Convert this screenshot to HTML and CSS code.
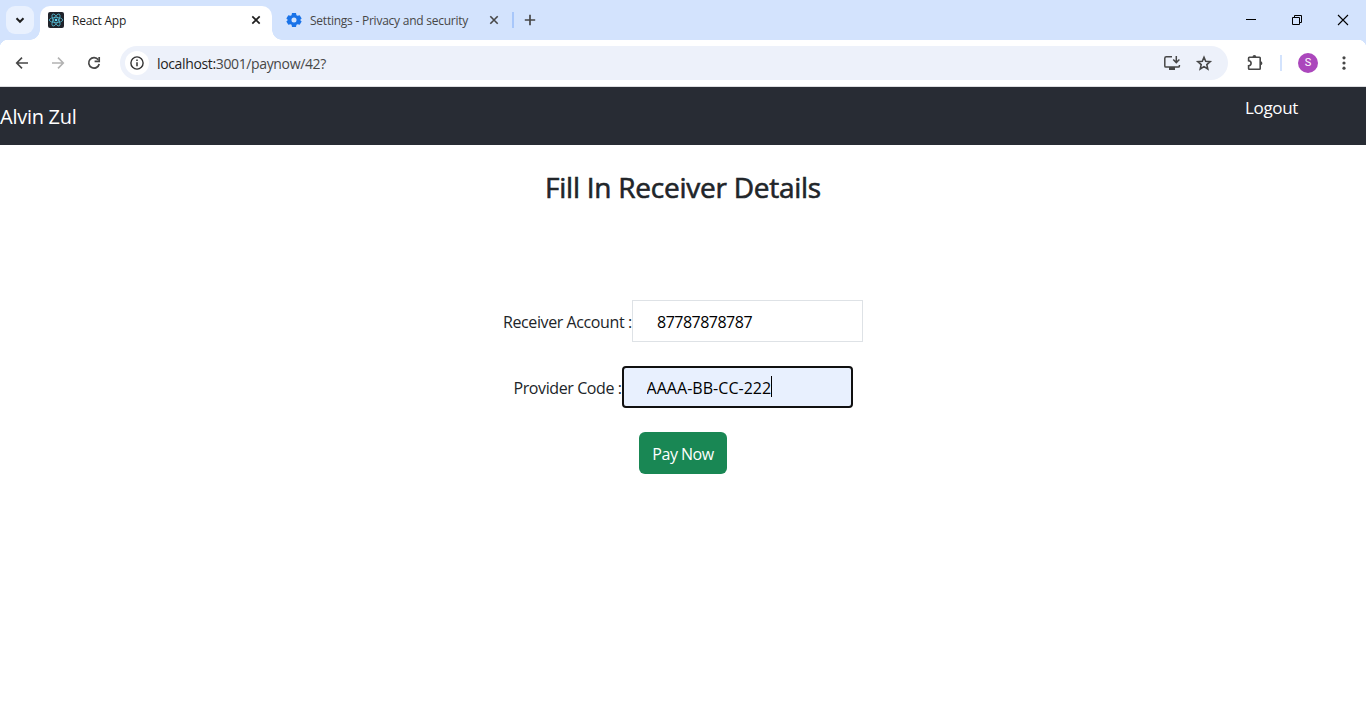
FILE: index.html
```html
<!DOCTYPE html>
<html lang="en">
<head>
<meta charset="utf-8">
<title>React App</title>
<link rel="stylesheet" href="styles.css">
</head>
<body>
<div class="tabstrip">
  <div class="tab-search"><svg width="28" height="28" viewBox="0 0 28 28"><path d="M10.5 12.3l3.5 3.5 3.5-3.5" fill="none" stroke="#1f1f1f" stroke-width="2"/></svg></div>
  <div class="tab active">
    <svg class="favicon" width="16" height="16" viewBox="0 0 16 16"><rect width="16" height="16" rx="2" fill="#20232a"/><g fill="none" stroke="#53b9d1" stroke-width=".8"><ellipse cx="8" cy="8" rx="6.7" ry="2.6"/><ellipse cx="8" cy="8" rx="6.7" ry="2.6" transform="rotate(60 8 8)"/><ellipse cx="8" cy="8" rx="6.7" ry="2.6" transform="rotate(120 8 8)"/></g><circle cx="8" cy="8" r="1.3" fill="#61dafb"/></svg>
    <span class="tab-title t-react">React App</span>
    <svg class="close" width="16" height="16" viewBox="0 0 16 16"><path d="M4.3 4.3l7.4 7.4M11.7 4.3l-7.4 7.4" stroke="#1f1f1f" stroke-width="1.7"/></svg>
  </div>
  <div class="tab">
    <svg class="favicon" width="16" height="16" viewBox="0 0 24 24"><path fill="#1a73e8" fill-rule="evenodd" d="M9 1.500h6l.7 3.200 1.700 1 3.100-1 3 5.200-2.400 2.100 2.400 2.100-3 5.200-3.100-1-1.700 1-.7 3.200H9l-.7-3.200-1.700-1-3.100 1-3-5.200L2.900 12 .5 9.900l3-5.200 3.100 1 1.700-1zM12 8.200a3.800 3.800 0 1 0 0 7.600 3.800 3.800 0 0 0 0-7.600z"/></svg>
    <span class="tab-title t-settings">Settings - Privacy and security</span>
    <svg class="close" width="16" height="16" viewBox="0 0 16 16"><path d="M4.300 4.300l7.400 7.400M11.700 4.300l-7.400 7.400" stroke="#474747" stroke-width="1.600"/></svg>
  </div>
  <div class="tab-divider"></div>
  <svg class="new-tab" width="16" height="16" viewBox="0 0 16 16"><path d="M8 2.800v10.400M2.800 8h10.400" stroke="#474747" stroke-width="1.700"/></svg>
  <div class="window-controls">
    <svg width="46" height="40" viewBox="0 0 46 40"><path d="M18 19.500h10" stroke="#000"/></svg>
    <svg width="46" height="40" viewBox="0 0 46 40"><path d="M18.500 17.500h7v7h-7zM20.500 17.500v-2h7v7h-2" fill="none" stroke="#000"/></svg>
    <svg width="46" height="40" viewBox="0 0 46 40"><path d="M18 15l10 10M28 15l-10 10" stroke="#000" stroke-width="1.100"/></svg>
  </div>
</div>
<div class="toolbar">
  <svg class="nav-icon" width="20" height="20" viewBox="0 0 20 20"><path d="M16 10H4.800M10 4.600L4.700 10l5.300 5.400" fill="none" stroke="#474747" stroke-width="1.600"/></svg>
  <svg class="nav-icon" width="20" height="20" viewBox="0 0 20 20"><path d="M4 10h11.200M10 4.600l5.300 5.400-5.300 5.400" fill="none" stroke="#b2b2b2" stroke-width="1.600"/></svg>
  <svg class="nav-icon" width="20" height="20" viewBox="0 0 20 20"><path d="M14.300 6.700A5.300 5.300 0 1 0 15.200 11" fill="none" stroke="#474747" stroke-width="1.700"/><path d="M15.200 4v4.400h-4.600" fill="none" stroke="#474747" stroke-width="1.700"/></svg>
  <div class="omnibox">
    <div class="site-info"><svg width="24" height="24" viewBox="0 0 24 24"><circle cx="12" cy="12" r="6.100" fill="none" stroke="#333" stroke-width="1.400"/><path d="M12 11.200v4M12 8.400v1.500" stroke="#333" stroke-width="1.500"/></svg></div>
    <span class="url"><b>localhost:</b>3001/paynow/42?</span>
    <svg class="install" width="20" height="20" viewBox="0 0 20 20"><path d="M10 3.700H4.300q-1.500 0-1.500 1.500v7.700q0 1.100 1.100 1.100h12.400q1.100 0 1.100-1.100V12M14.300 3v6M11.200 6.500l3.100 3.100 3.100-3.100" fill="none" stroke="#474747" stroke-width="1.500"/><path d="M7 14h6v3H7z" fill="#474747"/></svg>
    <svg class="star" width="20" height="20" viewBox="0 0 20 20"><path d="M10 4.200l1.700 4 4.500.4-3.400 3 1 4.400-3.800-2.400L6.200 16l1-4.400-3.400-3 4.500-.4z" fill="none" stroke="#474747" stroke-width="1.600"/></svg>
  </div>
  <svg class="extensions" width="20" height="20" viewBox="0 0 20 20"><path d="M4.300 4.300h10.200q.700 0 .7.700v10.500q0 .7-.7.700H4.300q-.7 0-.7-.7v-2.700q2.500-.3 2.500-2.500T3.600 7.800V5q0-.7.700-.7z" fill="none" stroke="#474747" stroke-width="1.600"/><path d="M7.500 4a1.900 1.900 0 0 1 3.800 0zM15.500 8.300a1.900 1.900 0 0 1 0 3.800z" fill="#474747"/></svg>
  <div class="toolbar-divider"></div>
  <div class="avatar">S</div>
  <svg class="menu" width="20" height="20" viewBox="0 0 20 20" fill="#474747"><circle cx="10" cy="4.800" r="1.600"/><circle cx="10" cy="10" r="1.600"/><circle cx="10" cy="15.200" r="1.600"/></svg>
</div>
<nav class="navbar"><span class="brand">Alvin Zul</span><a class="logout">Logout</a></nav>
<main>
  <h3 class="heading">Fill In Receiver Details</h3>
  <form class="details">
    <div class="row"><label class="l-account" for="account">Receiver Account :</label><input id="account" class="field f-account" value="87787878787"></div>
    <div class="row"><label class="l-code" for="code">Provider Code :</label><div class="field-wrap"><input id="code" class="field focused f-code" value="AAAA-BB-CC-222"><i class="caret"></i></div></div>
    <button class="pay" type="button">Pay Now</button>
  </form>
</main>
</body>
</html>
```
FILE: styles.css
```css
* { box-sizing: border-box; }
body { margin: 0; height: 722px; overflow: hidden; background: #fff; color: #212529; font-family: "Open Sans", "Noto Sans", sans-serif; font-size: 16px; line-height: 24px; }
svg { display: block; flex: none; }
span, label, a { white-space: nowrap; }
.tabstrip { display: flex; align-items: center; height: 40px; padding-left: 6px; background: #d3e3fd; }
.tab-search { width: 28px; height: 28px; border-radius: 9px; background: #e9f1fe; margin-right: 6px; }
.tab { display: flex; align-items: center; width: 238px; height: 34px; padding: 0 8px 0 14px; font-size: 12px; color: #474747; }
.tab.active { position: relative; width: 232px; height: 34px; margin-top: 6px; padding: 0 8px 6px; border-radius: 10px 10px 0 0; background: #fff; color: #1f1f1f; }
.tab.active::before, .tab.active::after { content: ""; position: absolute; bottom: 0; width: 10px; height: 10px; }
.tab.active::before { left: -10px; background: radial-gradient(circle at 0 0, transparent 9.5px, #fff 10px); }
.tab.active::after { right: -10px; background: radial-gradient(circle at 100% 0, transparent 9.5px, #fff 10px); }
.favicon { margin-right: 8px; }
.tab-title { padding-top: 2px; }
.t-react { letter-spacing: -.25px; }
.t-settings { letter-spacing: -.24px; }
.close { margin-left: auto; }
.tab-divider { width: 2px; height: 16px; margin: 0 8px 0 2px; background: #a8c7fa; }
.window-controls { display: flex; margin-left: auto; }
.toolbar { display: flex; align-items: center; height: 47px; padding: 0 12px; border-bottom: 1px solid #dcdde0; background: radial-gradient(circle at 8px 8px, #fff 8px, #d3e3fd 8.5px) 0 0 / 8px 8px no-repeat, radial-gradient(circle at 0 8px, #fff 8px, #d3e3fd 8.5px) 100% 0 / 8px 8px no-repeat, #fff; }
.nav-icon { flex: none; margin-right: 16px; }
.omnibox { display: flex; flex: none; align-items: center; width: 1108px; height: 34px; padding: 0 14px 0 5px; border-radius: 17px; background: #edf1fa; }
.site-info { width: 24px; height: 24px; border-radius: 50%; background: #fff; margin-right: 8px; }
.url { padding-top: 1px; font-size: 14px; letter-spacing: -.36px; color: #474747; }
.url b { font-weight: 400; color: #1f1f1f; }
.install { margin-left: auto; }
.star { margin-left: 12px; }
.extensions { margin-left: 17px; }
.toolbar-divider { flex: none; width: 2px; height: 16px; margin: 0 16px 0 15px; background: #d3e3fd; }
.avatar { flex: none; width: 20px; height: 20px; border-radius: 50%; background: #ab47bc; color: #fff; font: 11px/20px Roboto, sans-serif; text-align: center; }
.menu { margin-left: 16px; }
.navbar { display: flex; justify-content: space-between; height: 58px; padding: 9px 68px 0 0; background: #282c34; color: #fff; }
.brand { margin-top: 6px; font-size: 20px; line-height: 30px; letter-spacing: -.27px; }
.logout { font-size: 17px; letter-spacing: -.35px; }
main { display: flex; flex-direction: column; align-items: center; }
.heading { margin: 25px 0 0; font-size: 28px; font-weight: 500; line-height: 34px; letter-spacing: -.25px; white-space: nowrap; -webkit-text-stroke: .6px #212529; }
.details { display: flex; flex-direction: column; align-items: center; gap: 24px; margin-top: 96px; }
.row { display: flex; align-items: center; height: 42px; }
.l-account, .l-code { padding-top: 1px; letter-spacing: -.4px; }
.l-account { width: 129px; }
.l-code { width: 108px; }
.field { display: block; width: 231px; height: 42px; padding: 1px 24px 0; border: 1px solid #dee2e6; background: #fff; color: #000; font: inherit; letter-spacing: -.51px; outline: 0; }
.focused { border: 2px solid #101010; border-radius: 4px; background: #e8f0fe; padding: 1px 23px 0; }
.f-code { letter-spacing: .04px; }
.field-wrap { position: relative; }
.caret { position: absolute; left: 149px; top: 10px; width: 1px; height: 21px; background: #000; }
.pay { width: 88px; height: 42px; padding: 1px 0 0; border: 0; border-radius: 6px; background: #198754; color: #fff; font: inherit; letter-spacing: -.5px; white-space: nowrap; }
```
